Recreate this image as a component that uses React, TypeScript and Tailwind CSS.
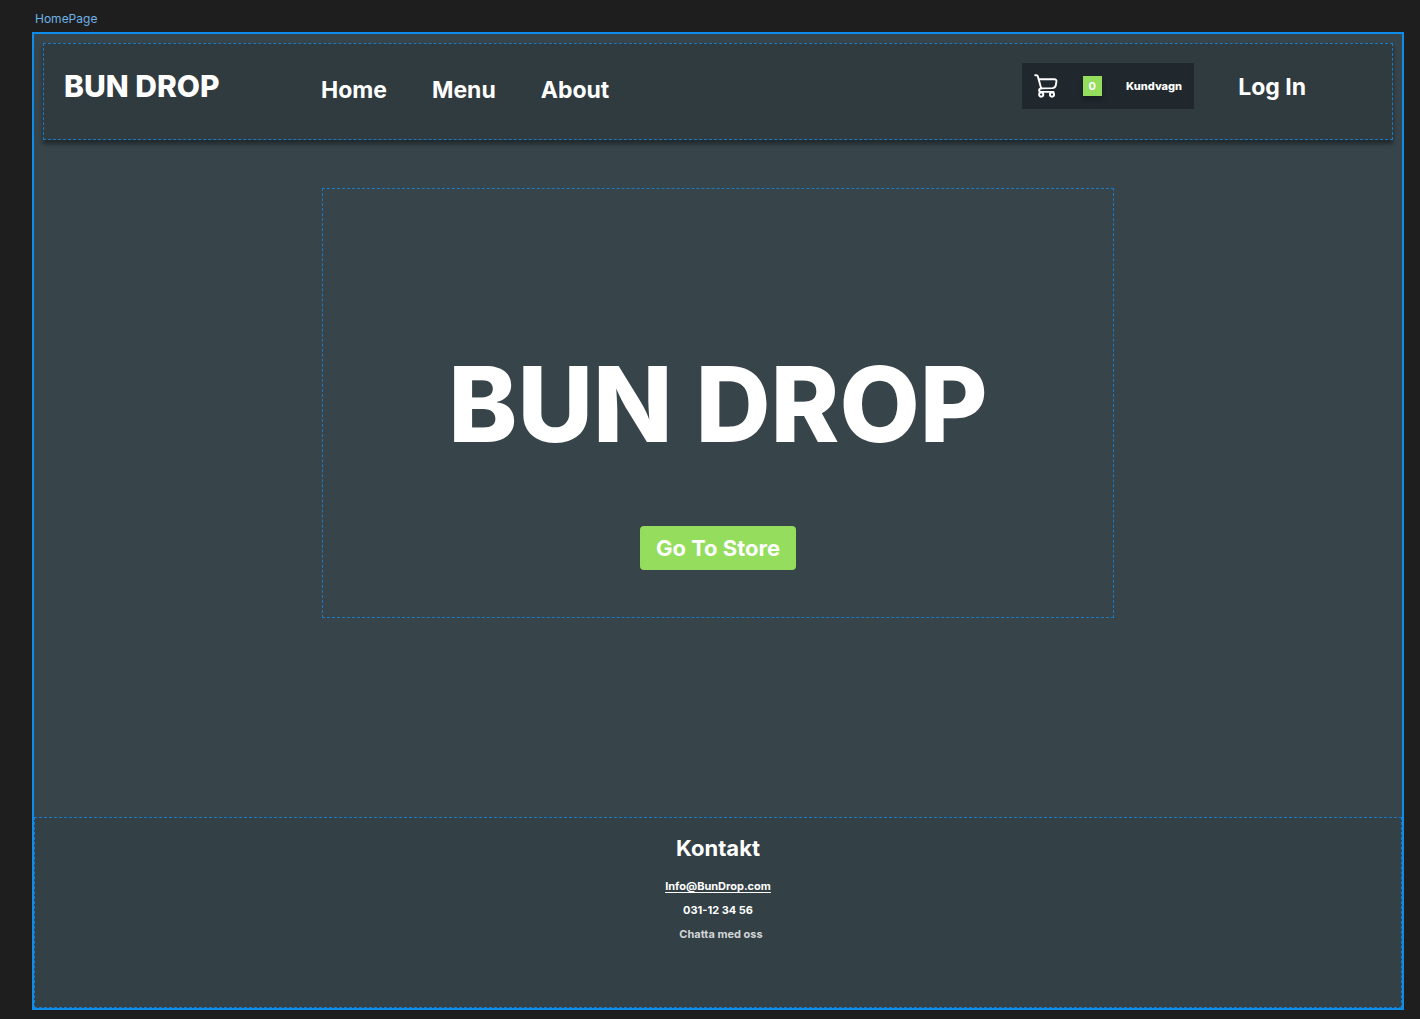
const navLinks = [
  { label: 'Home', href: '#home' },
  { label: 'Menu', href: '#menu' },
  { label: 'About', href: '#about' },
];

function CartIcon() {
  return (
    <svg
      viewBox="0 0 24 24"
      className="h-6 w-6 shrink-0"
      fill="none"
      stroke="white"
      strokeWidth="1.9"
      strokeLinecap="round"
      strokeLinejoin="round"
      aria-hidden="true"
    >
      <path d="M1.2 1.2h1.3c.8 0 1.1.4 1.3 1.1l3.4 12.3" />
      <path d="M4.8 5.3h15.4c1.7 0 2.4.9 2.2 2.3l-.6 3.7c-.4 1.9-1.5 2.7-3.3 2.8l-11.1.3c-1.6.1-2.3 1-2.3 1.9 0 1 .8 1.6 2 1.6h12.4" />
      <circle cx="7.2" cy="20.6" r="2.1" />
      <circle cx="18" cy="20.6" r="2.1" />
    </svg>
  );
}

function Header() {
  return (
    <header className="m-[9px] flex h-[97px] items-start border border-dashed border-[#1a7ac4] bg-[#303b40] pl-5 pr-[86px] shadow-[0_4px_4px_rgba(0,0,0,0.4)]">
      <a href="#home" className="mt-[23px] w-[257px] shrink-0 text-[30px] font-extrabold leading-[38px] text-white">
        BUN DROP
      </a>
      <nav className="mt-[31px] flex gap-[45px] text-[23px] leading-[30px] text-white">
        {navLinks.map((link) => (
          <a key={link.label} href={link.href}>
            {link.label}
          </a>
        ))}
      </nav>
      <button
        type="button"
        className="ml-auto mt-[19px] flex h-[46px] w-[172px] shrink-0 items-center justify-between bg-[#20282d] pl-3 pr-3 text-white"
      >
        <CartIcon />
        <span className="flex h-5 w-[19px] items-center justify-center bg-[#94dd5d] text-[11px] shadow-[0_4px_4px_rgba(0,0,0,0.25)]">
          0
        </span>
        <span className="text-[11px] font-extrabold leading-4">Kundvagn</span>
      </button>
      <a href="#login" className="ml-11 mt-7 shrink-0 text-[23px] leading-[30px] text-white">
        Log In
      </a>
    </header>
  );
}

function Footer() {
  return (
    <footer className="flex h-[191px] flex-col items-center border border-dashed border-[#1a7ac4] bg-[#334046] pt-4 text-[11px] leading-4 text-white">
      <h2 className="text-[22px] leading-7">Kontakt</h2>
      <a href="mailto:Info@BunDrop.com" className="mt-4 underline underline-offset-2">
        Info@BunDrop.com
      </a>
      <a href="tel:031123456" className="mt-2">
        031-12 34 56
      </a>
      <a href="#chat" className="mt-2 pl-[6px] text-[#d2d5d6]">
        Chatta med oss
      </a>
    </footer>
  );
}

export default function App() {
  return (
    <div className="flex min-h-screen flex-col bg-[#1e1e1e] pb-[9px] pl-8 pr-4 font-['Inter',sans-serif] font-bold">
      <p className="h-8 pl-[3px] pt-[11px] text-[12px] font-normal leading-4 text-[#6eb1e4]">HomePage</p>
      <div className="flex flex-1 flex-col border-2 border-[#0d8ce9] bg-[#37444a]">
        <Header />
        <main className="mb-10 flex flex-1 flex-col items-center pt-[39px]">
          <section className="flex h-[430px] w-[792px] max-w-full flex-col items-center border border-dashed border-[#1a7ac4] pt-[151px]">
            <h1 className="text-center text-[104px] font-extrabold leading-[128px] text-white">BUN DROP</h1>
            <button
              type="button"
              className="mt-[58px] h-11 rounded bg-[#94dd5d] px-4 text-[22px] leading-7 text-white"
            >
              Go To Store
            </button>
          </section>
        </main>
        <Footer />
      </div>
    </div>
  );
}
